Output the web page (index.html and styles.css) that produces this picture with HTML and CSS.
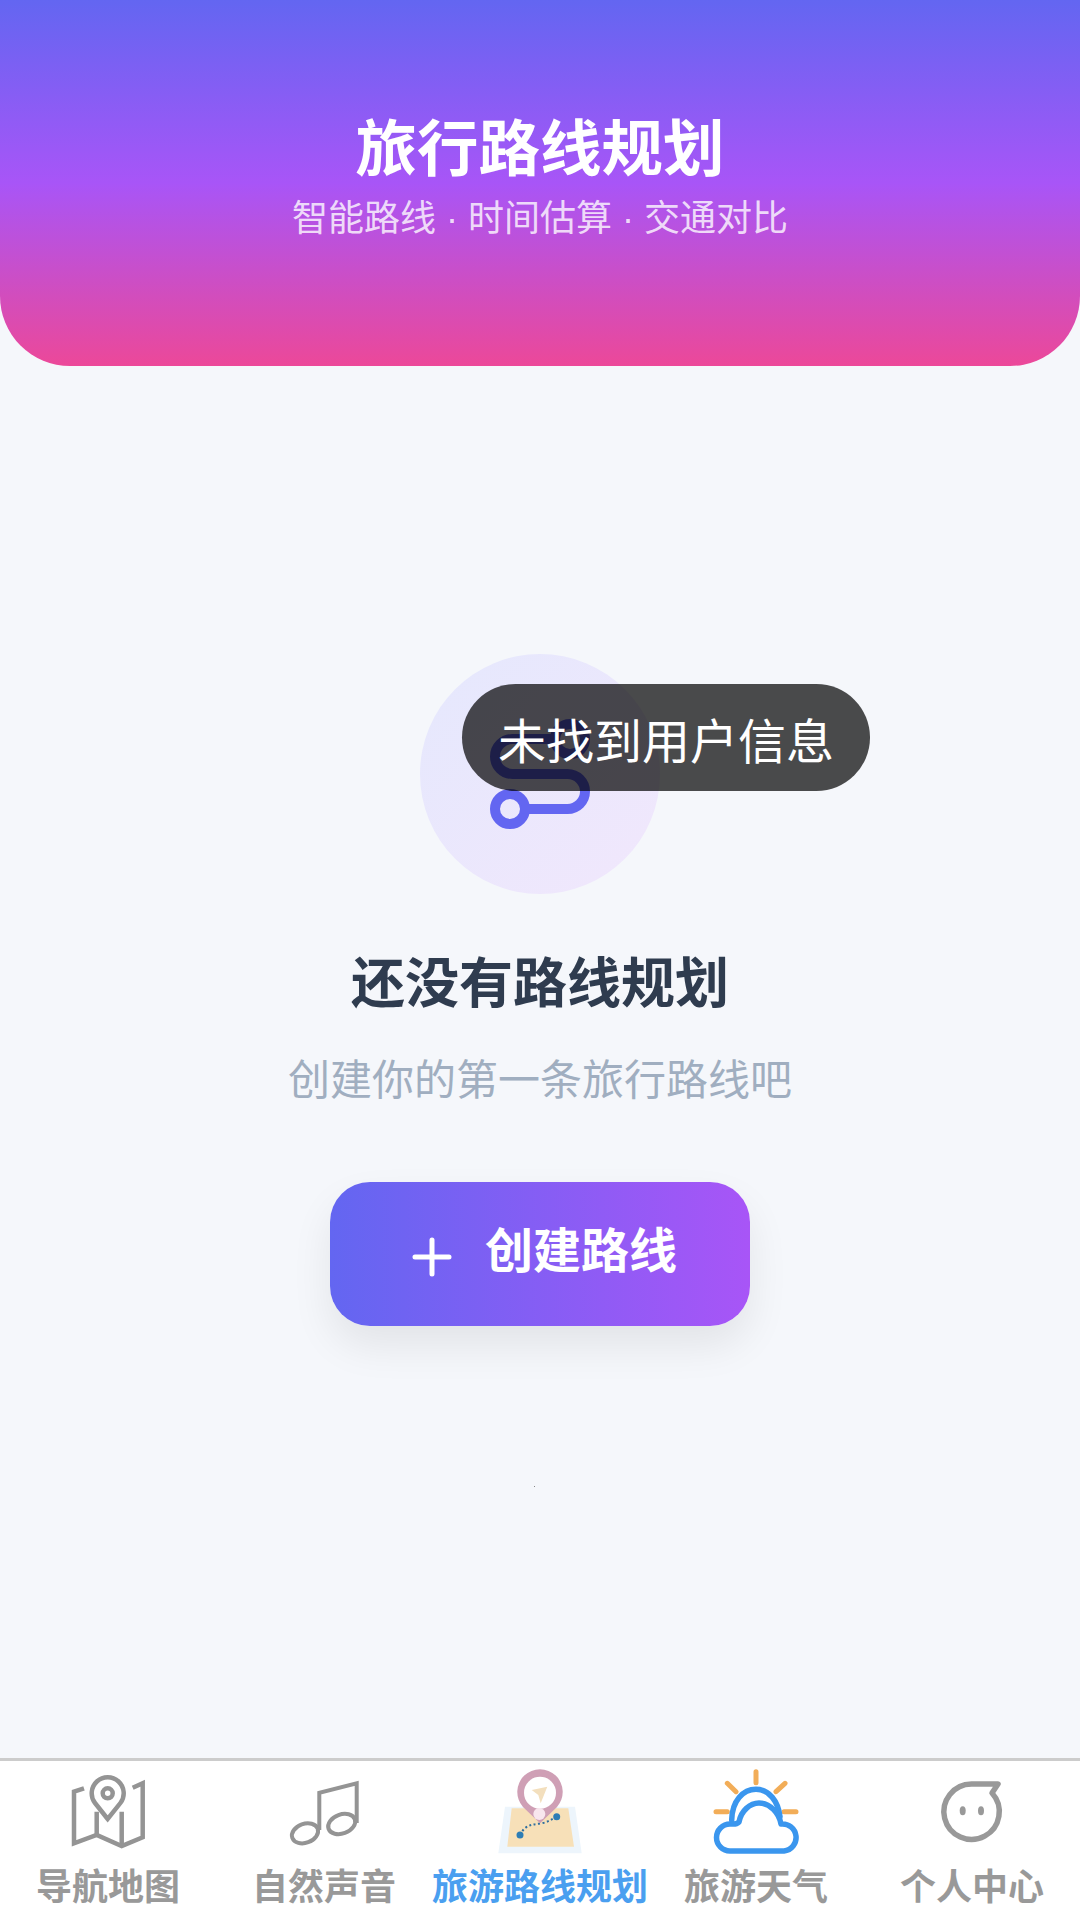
FILE: index.html
```html
<!DOCTYPE html>
<html lang="zh-CN">
<head>
    <meta charset="UTF-8">
    <title>旅行路线规划</title>
    <link rel="stylesheet" href="styles.css">
</head>
<body>
    <div class="page">
        <header class="hero">
            <h1 class="hero-title">旅行路线规划</h1>
            <p class="hero-sub">智能路线 · 时间估算 · 交通对比</p>
        </header>

        <main class="empty">
            <div class="empty-badge">
                <svg class="route-icon" viewBox="0 0 24 24" fill="none" stroke="#6366f1" stroke-width="2" stroke-linecap="round" stroke-linejoin="round">
                    <circle cx="6" cy="19" r="3"/>
                    <path d="M9 19h8.5a3.5 3.5 0 0 0 0-7h-11a3.5 3.5 0 0 1 0-7H15"/>
                    <circle cx="18" cy="5" r="3"/>
                </svg>
            </div>
            <h2 class="empty-title">还没有路线规划</h2>
            <p class="empty-sub">创建你的第一条旅行路线吧</p>
            <button class="create-btn">
                <svg class="plus-icon" viewBox="0 0 48 48" fill="none" stroke="#fff" stroke-width="5" stroke-linecap="round">
                    <path d="M24 7v34M7 24h34"/>
                </svg>
                <span class="create-text">创建路线</span>
            </button>
        </main>

        <nav class="tabbar">
            <div class="tab">
                <svg class="tab-icon" viewBox="0 0 88 88" fill="none" stroke="#949494" stroke-width="4.5">
                    <path d="M20 20.3 10 23.7V75.3L32.7 67 57.7 78 78.7 69.3V15.3L68.7 19.7"/>
                    <path d="M32.7 43.7V67M57.7 43.7V78"/>
                    <path d="M43.7 51 31 35A16 16 0 1 1 56.4 35Z"/>
                    <circle cx="43.7" cy="25.3" r="5"/>
                </svg>
                <span class="tab-label">导航地图</span>
            </div>
            <div class="tab">
                <svg class="tab-icon" viewBox="0 0 88 88" fill="none" stroke="#949494" stroke-width="4">
                    <ellipse cx="25" cy="65.3" rx="13.5" ry="9.5" transform="rotate(-20 25 65.3)"/>
                    <ellipse cx="61.7" cy="56" rx="14" ry="9.5" transform="rotate(-20 61.7 56)"/>
                    <path d="M39.3 62V24.7L76.7 15.3V55"/>
                </svg>
                <span class="tab-label">自然声音</span>
            </div>
            <div class="tab">
                <svg class="tab-icon" viewBox="0 0 88 88">
                    <path d="M9 38.7H79L85.7 85.3H2.3Z" fill="#edf5fc"/>
                    <path d="M15.7 40.3H72.3L78 78.7H11.3Z" fill="#f7e0b8"/>
                    <path d="M24 67C30 55 38 57 47 55 52 54 56 51 60.7 48.7" fill="none" stroke="#2f6f9f" stroke-width="2" stroke-dasharray="2 2.5"/>
                    <circle cx="24" cy="67" r="3.5" fill="#2d7db5"/>
                    <circle cx="60.7" cy="48.7" r="3.5" fill="#2d7db5"/>
                    <path d="M44 55.3 27 39A22.7 22.7 0 1 1 61 39Z" fill="#cf9fb5"/>
                    <circle cx="44" cy="24.7" r="16" fill="#fff"/>
                    <path d="M35.7 22 51.3 18.7 44.7 35.3 42.3 27Z" fill="#f3dfbd"/>
                    <circle cx="43.3" cy="46" r="6" fill="#f8e6ee"/>
                </svg>
                <span class="tab-label tab-label-active">旅游路线规划</span>
            </div>
            <div class="tab">
                <svg class="tab-icon" viewBox="0 0 88 88" fill="none" stroke-linecap="round" stroke-linejoin="round">
                    <path d="M44 3.7V14.7M15.3 15.3 24 23.7M73 15.3 64 23.7M4 43.7H15.3M72 43.7H84" stroke="#f2ad58" stroke-width="5"/>
                    <path d="M19.7 52C20 33 31 21.3 44 21.3 57 21.3 66 33 68 48.7" stroke="#3a96ee" stroke-width="5.5"/>
                    <path d="M18 83A13.5 13.5 0 0 1 18 56C22 56 24 57 27 54 29 43 38 35 47 35 58 35 67 45 69 56A13.5 13.5 0 0 1 72 83Z" fill="#fff" stroke="#3a96ee" stroke-width="5.5"/>
                </svg>
                <span class="tab-label">旅游天气</span>
            </div>
            <div class="tab">
                <svg class="tab-icon" viewBox="0 0 88 88" fill="none">
                    <path d="M70 16H43.7A27.7 27.7 0 1 0 64 25Z" stroke="#999" stroke-width="5.5" stroke-linejoin="round"/>
                    <ellipse cx="34.7" cy="42.7" rx="3" ry="4.5" fill="#999"/>
                    <ellipse cx="53" cy="42.7" rx="3" ry="4.5" fill="#999"/>
                </svg>
                <span class="tab-label">个人中心</span>
            </div>
        </nav>

        <div class="toast">未找到用户信息</div>
        <div class="speck"></div>
    </div>
</body>
</html>
```

FILE: styles.css
```css
* {
    box-sizing: border-box;
}
body {
    margin: 0;
    font-family: "Noto Sans CJK SC", "Noto Sans", sans-serif;
    background-color: #f5f7fb;
}
.page {
    position: relative;
    display: flex;
    flex-direction: column;
    height: 1920px;
    overflow: hidden;
}
.hero {
    height: 366px;
    padding-top: 106px;
    background: linear-gradient(180deg, #6366f1 0%, #a855f7 50%, #ec4899 100%);
    border-radius: 0 0 70px 70px;
    text-align: center;
    color: #fff;
}
.hero-title {
    margin: 0;
    font-size: 61.5px;
    line-height: 78px;
    font-weight: 700;
}
.hero-sub {
    margin: 0;
    padding-top: 10px;
    font-family: "Liberation Sans", "Noto Sans CJK SC", sans-serif;
    font-size: 36px;
    line-height: 50px;
    color: rgba(255, 255, 255, 0.8);
}
.empty {
    flex: 1;
    display: flex;
    flex-direction: column;
    align-items: center;
    padding-top: 288px;
}
.empty-badge {
    display: flex;
    align-items: center;
    justify-content: center;
    width: 240px;
    height: 240px;
    border-radius: 50%;
    background: linear-gradient(135deg, #e5e8fd, #f1e7fc);
}
.route-icon {
    width: 120px;
    height: 120px;
}
.empty-title {
    margin: 51px 0 0;
    font-size: 54px;
    line-height: 70px;
    font-weight: 700;
    color: #2f3c4f;
}
.empty-sub {
    margin: 32px 0 0;
    font-size: 42px;
    line-height: 60px;
    color: #a0aec0;
}
.create-btn {
    display: flex;
    align-items: center;
    justify-content: center;
    gap: 29px;
    width: 420px;
    height: 144px;
    margin-top: 75px;
    padding: 0 0 0 5px;
    border: none;
    border-radius: 40px;
    background: linear-gradient(90deg, #6366f1, #a855f7);
    box-shadow: 0 20px 40px rgba(0, 0, 0, 0.08);
    font-family: inherit;
    font-size: 48px;
    font-weight: 700;
    color: #fff;
}
.plus-icon {
    width: 48px;
    height: 48px;
    margin-top: 6px;
}
.create-text {
    margin-bottom: 14px;
}
.tabbar {
    display: flex;
    height: 162px;
    padding-top: 7px;
    border-top: 3px solid #ccc;
    background-color: #fff;
}
.tab {
    flex: 1;
    display: flex;
    flex-direction: column;
    align-items: center;
}
.tab-icon {
    width: 88px;
    height: 88px;
}
.tab-label {
    margin-top: 6px;
    font-size: 36px;
    line-height: 44px;
    font-weight: 700;
    color: #999;
    white-space: nowrap;
}
.tab-label-active {
    color: #4a9ff0;
}
.toast {
    position: absolute;
    left: 462px;
    top: 684px;
    display: flex;
    align-items: center;
    justify-content: center;
    width: 408px;
    height: 107px;
    border-radius: 54px;
    background-color: rgba(0, 0, 0, 0.7);
    font-size: 48px;
    color: #fff;
}
.speck {
    position: absolute;
    left: 534px;
    top: 1486px;
    width: 1px;
    height: 1px;
    background-color: #888;
}
```
